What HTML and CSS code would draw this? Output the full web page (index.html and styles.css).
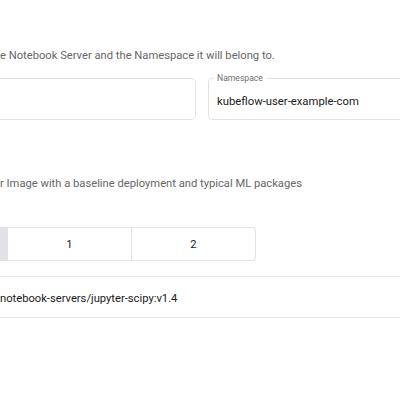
FILE: index.html
```html
<!DOCTYPE html>
<html lang="en">
<head>
<meta charset="utf-8">
<title>New Notebook</title>
<link rel="stylesheet" href="styles.css">
</head>
<body>
<main class="page">
  <p class="desc desc-name">e Notebook Server and the Namespace it will belong to.</p>
  <div class="fields">
    <div class="field field-name"></div>
    <div class="field field-ns">
      <span class="field-label">Namespace</span>
      <span class="field-value">kubeflow-user-example-com</span>
    </div>
  </div>
  <p class="desc desc-image">r Image with a baseline deployment and typical ML packages</p>
  <div class="toggle">
    <div class="seg seg-selected"></div>
    <div class="seg">1</div>
    <div class="seg">2</div>
  </div>
  <div class="image-row">notebook-servers/jupyter-scipy:v1.4</div>
</main>
</body>
</html>
```
FILE: styles.css
```css
html, body {
  margin: 0;
  padding: 0;
  background: #ffffff;
}
body {
  font-family: Roboto, "Liberation Sans", sans-serif;
  width: 400px;
  overflow: hidden;
}
.page {
  padding-top: 48px;
  display: flex;
  flex-direction: column;
}
.desc {
  margin: 0;
  font-size: 11.2px;
  line-height: 16px;
  color: #666666;
  white-space: nowrap;
}
.fields {
  margin-top: 14px;
  display: flex;
  gap: 12px;
  height: 42px;
}
.field {
  box-sizing: border-box;
  border: 1px solid #e2e2e2;
  height: 42px;
  position: relative;
}
.field-name {
  width: 196px;
  border-left: none;
  border-radius: 0 5px 5px 0;
}
.field-ns {
  flex: 1;
  border-right: none;
  border-radius: 5px 0 0 5px;
  display: flex;
  align-items: center;
  padding-left: 8px;
  padding-top: 5px;
}
.field-label {
  position: absolute;
  left: 5px;
  top: -6px;
  padding: 0 3px;
  background: #ffffff;
  font-size: 8.6px;
  line-height: 10px;
  color: #6f6f6f;
}
.field-value {
  font-size: 11.3px;
  color: #1a1a1a;
  white-space: nowrap;
}
.desc-image {
  margin-top: 56px;
}
.toggle {
  margin-top: 35px;
  box-sizing: border-box;
  width: 256px;
  height: 34px;
  display: flex;
  border: 1px solid #e2e2e2;
  border-left: none;
  border-radius: 0 4px 4px 0;
  overflow: hidden;
}
.seg {
  box-sizing: border-box;
  width: 124px;
  display: flex;
  align-items: center;
  justify-content: center;
  border-left: 1px solid #e2e2e2;
  padding-top: 1px;
  font-size: 11.2px;
  color: #1a1a1a;
}
.seg-selected {
  width: 7px;
  border-left: none;
  background: #e3e1e5;
}
.image-row {
  margin-top: 15px;
  box-sizing: border-box;
  height: 42px;
  padding-top: 3px;
  border-top: 1px solid #e6e6e6;
  border-bottom: 1px solid #e6e6e6;
  display: flex;
  align-items: center;
  font-size: 11.2px;
  color: #1a1a1a;
  white-space: nowrap;
}
```
